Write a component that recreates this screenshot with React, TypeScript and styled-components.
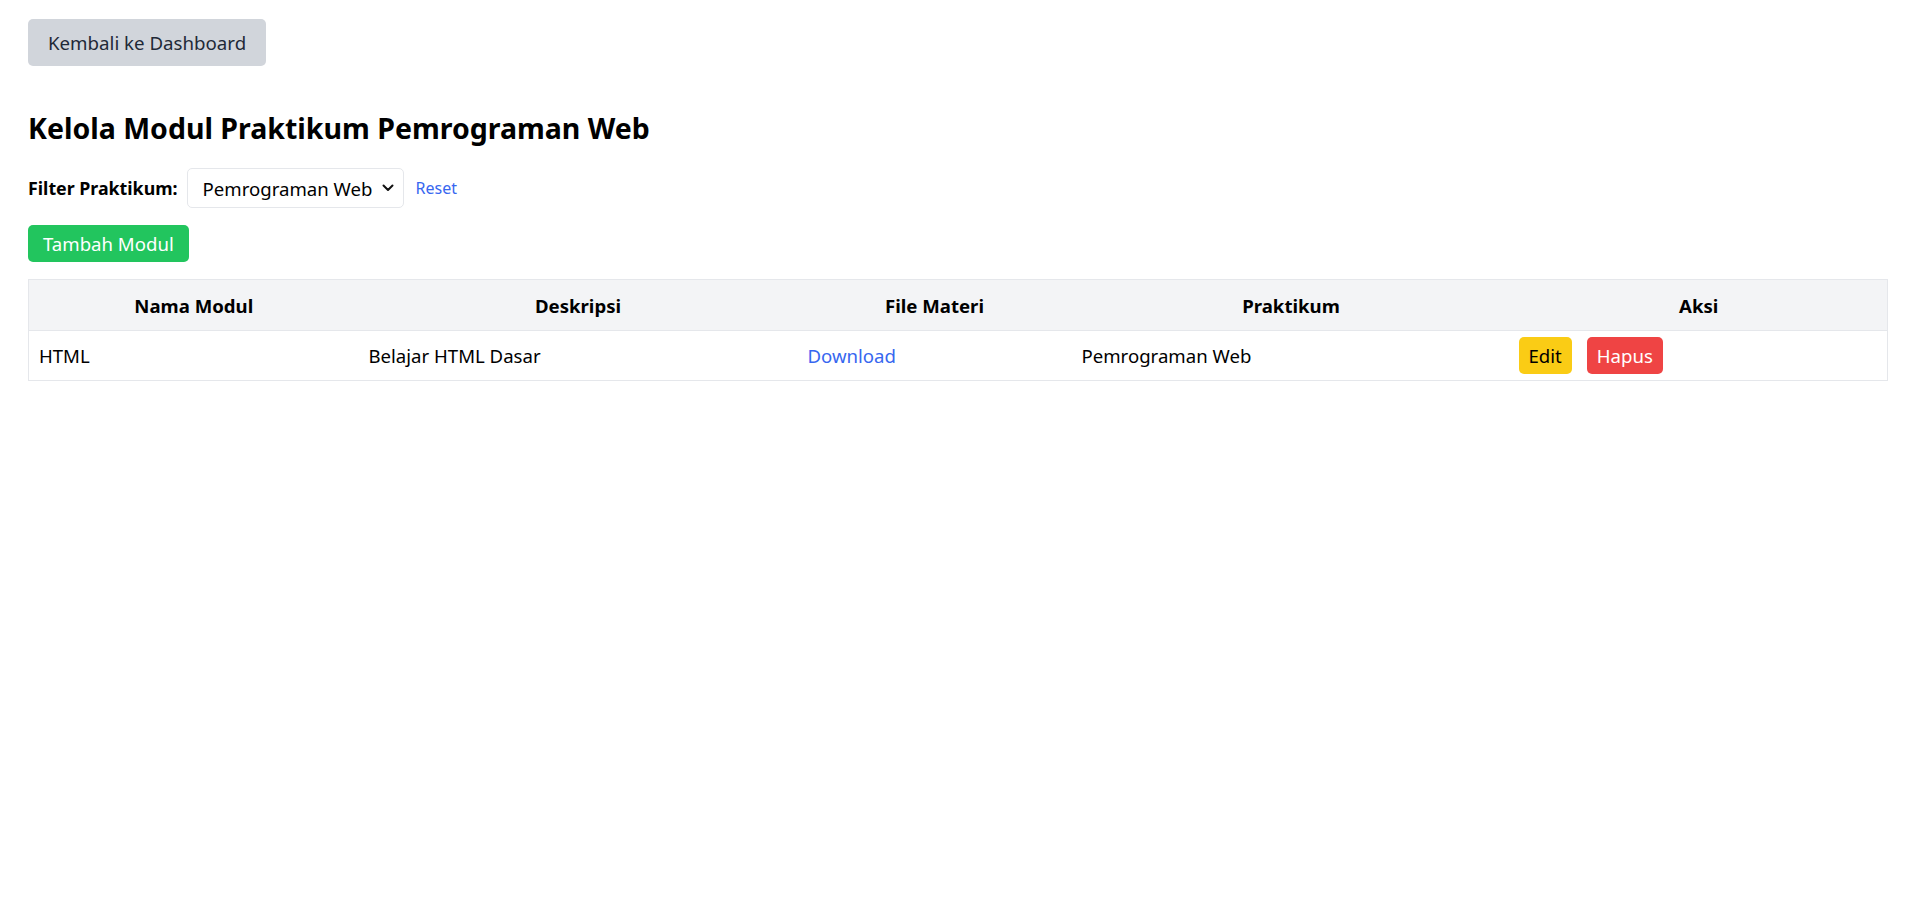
import styled, { createGlobalStyle } from 'styled-components'

const GlobalStyle = createGlobalStyle`
  html, body {
    margin: 0;
    padding: 0;
    background: #ffffff;
  }
  body {
    font-family: 'Noto Sans', 'Open Sans', sans-serif;
    font-size: 18.6px;
    color: #000000;
  }
  * {
    box-sizing: border-box;
  }
`

const Page = styled.div`
  padding: 19px 27px 0 28px;
`

const BackButton = styled.button`
  display: inline-flex;
  align-items: center;
  height: 47px;
  padding: 0 20px;
  border: none;
  border-radius: 5px;
  background: #d1d5db;
  color: #1f2937;
  font-family: inherit;
  font-size: 18.7px;
  cursor: pointer;
`

const Title = styled.h1`
  margin: 42px 0 0;
  font-size: 28.5px;
  line-height: 40px;
  font-weight: 700;
`

const FilterRow = styled.form`
  display: flex;
  align-items: center;
  margin-top: 20px;
  height: 40px;
`

const FilterLabel = styled.label`
  font-weight: 700;
  font-size: 17.8px;
  margin-right: 9px;
`

const SelectWrap = styled.div`
  position: relative;
  width: 217px;
  height: 40px;
`

const Select = styled.select`
  appearance: none;
  width: 100%;
  height: 100%;
  padding: 0 20px 0 15px;
  border: 1px solid #e5e7eb;
  border-radius: 5px;
  background: #ffffff;
  font-family: inherit;
  font-size: 18.6px;
  color: #000000;
`

const Chevron = styled.svg`
  position: absolute;
  right: 10px;
  top: 16px;
  pointer-events: none;
`

const ResetLink = styled.a`
  margin-left: 12px;
  color: #3767f0;
  font-size: 16px;
  text-decoration: none;
`

const AddButton = styled.button`
  display: inline-flex;
  align-items: center;
  height: 37px;
  margin-top: 17px;
  padding: 0 15px;
  border: none;
  border-radius: 5px;
  background: #22c55e;
  color: #ffffff;
  font-family: inherit;
  font-size: 18.6px;
  cursor: pointer;
`

const Table = styled.table`
  width: 100%;
  margin-top: 17px;
  border-collapse: collapse;
  table-layout: fixed;
  border: 1px solid #e5e7eb;
`

const HeadRow = styled.tr`
  background: #f3f4f6;
  height: 51px;
`

const HeadCell = styled.th<{ $w: number }>`
  width: ${(p) => p.$w}px;
  padding: 0 10px;
  font-size: 18.6px;
  font-weight: 700;
  text-align: center;
`

const BodyRow = styled.tr`
  height: 50px;
  border-top: 1px solid #e5e7eb;
`

const Cell = styled.td`
  padding: 0 10px;
  font-size: 18.6px;
  vertical-align: middle;
`

const FileLink = styled.a`
  color: #3767f0;
  text-decoration: none;
`

const Actions = styled.div`
  display: flex;
  gap: 15px;
  margin-left: -2px;
`

const ActionButton = styled.button<{ $tone: 'edit' | 'delete' }>`
  height: 37px;
  padding: 0 10px;
  border: none;
  border-radius: 5px;
  background: ${(p) => (p.$tone === 'edit' ? '#facc15' : '#ef4444')};
  color: ${(p) => (p.$tone === 'edit' ? '#000000' : '#ffffff')};
  font-family: inherit;
  font-size: 18.6px;
  cursor: pointer;
`

const columns = [
  { label: 'Nama Modul', w: 330 },
  { label: 'Deskripsi', w: 439 },
  { label: 'File Materi', w: 274 },
  { label: 'Praktikum', w: 439 },
  { label: 'Aksi', w: 377 },
]

const modules = [
  {
    id: 1,
    nama: 'HTML',
    deskripsi: 'Belajar HTML Dasar',
    praktikum: 'Pemrograman Web',
  },
]

export default function App() {
  return (
    <>
      <GlobalStyle />
      <Page>
        <BackButton>Kembali ke Dashboard</BackButton>
        <Title>Kelola Modul Praktikum Pemrograman Web</Title>
        <FilterRow>
          <FilterLabel htmlFor="praktikum">Filter Praktikum:</FilterLabel>
          <SelectWrap>
            <Select id="praktikum" defaultValue="web">
              <option value="web">Pemrograman Web</option>
            </Select>
            <Chevron width="12" height="8" viewBox="0 0 12 8">
              <path
                d="M1.5 1.5 6 6l4.5-4.5"
                fill="none"
                stroke="#111"
                strokeWidth="2"
                strokeLinecap="round"
                strokeLinejoin="round"
              />
            </Chevron>
          </SelectWrap>
          <ResetLink href="#">Reset</ResetLink>
        </FilterRow>
        <AddButton>Tambah Modul</AddButton>
        <Table>
          <thead>
            <HeadRow>
              {columns.map((c) => (
                <HeadCell key={c.label} $w={c.w}>
                  {c.label}
                </HeadCell>
              ))}
            </HeadRow>
          </thead>
          <tbody>
            {modules.map((m) => (
              <BodyRow key={m.id}>
                <Cell>{m.nama}</Cell>
                <Cell>{m.deskripsi}</Cell>
                <Cell>
                  <FileLink href="#">Download</FileLink>
                </Cell>
                <Cell>{m.praktikum}</Cell>
                <Cell>
                  <Actions>
                    <ActionButton $tone="edit">Edit</ActionButton>
                    <ActionButton $tone="delete">Hapus</ActionButton>
                  </Actions>
                </Cell>
              </BodyRow>
            ))}
          </tbody>
        </Table>
      </Page>
    </>
  )
}
